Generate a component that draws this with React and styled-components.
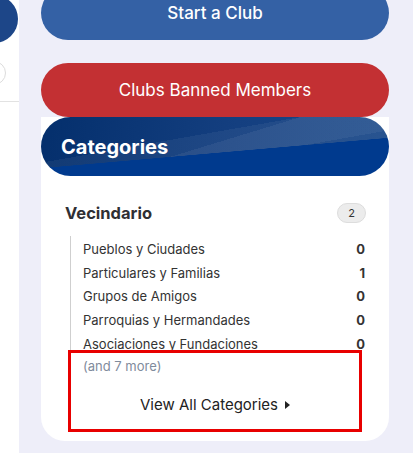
import React from "react";
import styled, { createGlobalStyle } from "styled-components";

const GlobalStyle = createGlobalStyle`
  html, body {
    margin: 0;
    padding: 0;
    background: #eeeef9;
    font-family: Inter, "Noto Sans", Arial, sans-serif;
  }
  * { box-sizing: border-box; }
`;

// --- Layout ---
const Page = styled.div`
  display: flex;
  gap: 22px;
  height: 453px;
  overflow: hidden;
`;

const Sidebar = styled.aside`
  width: 19px;
  flex-shrink: 0;
  background: #fff;
  overflow: hidden;
  display: flex;
  flex-direction: column;
`;

const AvatarBlob = styled.div`
  width: 48px;
  height: 48px;
  border-radius: 50%;
  background: #1d4688;
  margin: -5px 0 0 -30px;
  flex-shrink: 0;
`;

const SearchBlob = styled.div`
  width: 24px;
  height: 24px;
  border-radius: 50%;
  border: 1px solid #dcdcdc;
  background: #fff;
  margin: 18px 0 0 -18px;
  flex-shrink: 0;
`;

const SideRule = styled.div`
  height: 1px;
  background: #e2e2e2;
  margin-top: 16px;
`;

const Main = styled.main`
  width: 348px;
  flex-shrink: 0;
  margin-top: -14px;
  display: flex;
  flex-direction: column;
`;

const PillButton = styled.button`
  height: 54px;
  width: 100%;
  border: none;
  border-radius: 27px;
  background: ${p => p.$bg};
  color: #fff;
  font-family: inherit;
  font-size: 17px;
  font-weight: ${p => p.$weight || 400};
  margin-bottom: ${p => p.$gap || 0}px;
  cursor: pointer;
`;

// --- Categories card ---
const Card = styled.section`
  position: relative;
  background: #fff;
  border-radius: 0 0 24px 24px;
  padding-bottom: 25px;
`;

const CardHeader = styled.header`
  height: 59px;
  border-radius: 30px;
  padding: 0 20px;
  display: flex;
  align-items: center;
  color: #fff;
  font-size: 20px;
  font-weight: 700;
  background:
    linear-gradient(175deg, transparent 57%, #003a8e 57.5%),
    linear-gradient(170deg, transparent 38%, rgba(255,255,255,0.05) 38%, rgba(255,255,255,0.05) 62%, transparent 62%),
    linear-gradient(163deg, transparent 48%, rgba(255,255,255,0.06) 48%),
    linear-gradient(100deg, #042f6c 0%, #143f80 55%, #1c4a8a 100%);
`;

const GroupRow = styled.div`
  display: flex;
  align-items: center;
  justify-content: space-between;
  margin-top: 26px;
  padding: 0 23px 0 24px;
  height: 22px;
`;

const GroupTitle = styled.h3`
  margin: 0;
  font-size: 16.5px;
  font-weight: 700;
  color: #2f2f33;
`;

const Badge = styled.span`
  min-width: 29px;
  height: 20px;
  border-radius: 10px;
  background: #ececec;
  border: 1px solid #dddddd;
  font-size: 11px;
  color: #333;
  display: flex;
  align-items: center;
  justify-content: center;
`;

const SubList = styled.ul`
  list-style: none;
  margin: 12px 24px 0 29px;
  padding: 1px 0 0 12px;
  border-left: 1px solid #cfcfcf;
`;

const SubItem = styled.li`
  height: 23.8px;
  display: flex;
  align-items: center;
  justify-content: space-between;
  font-size: 13px;
  color: #333;
`;

const Count = styled.span`
  font-weight: 700;
  color: #333;
`;

const MoreNote = styled.div`
  margin: 1px 0 0 42px;
  height: 18px;
  display: flex;
  align-items: center;
  font-size: 13px;
  color: #7f8b9c;
`;

const ViewAll = styled.a`
  margin-top: 19px;
  height: 22px;
  display: flex;
  align-items: center;
  justify-content: center;
  gap: 7px;
  font-size: 15px;
  color: #222;
  text-decoration: none;
`;

const Caret = styled.span`
  width: 0;
  height: 0;
  border-top: 4.5px solid transparent;
  border-bottom: 4.5px solid transparent;
  border-left: 5px solid #222;
`;

// annotation frame drawn over the footer
const Highlight = styled.div`
  position: absolute;
  top: 233px;
  left: 27px;
  width: 294px;
  height: 82px;
  border: 3.5px solid #e80000;
  pointer-events: none;
`;

const items = [
  { name: "Pueblos y Ciudades", count: 0 },
  { name: "Particulares y Familias", count: 1 },
  { name: "Grupos de Amigos", count: 0 },
  { name: "Parroquias y Hermandades", count: 0 },
  { name: "Asociaciones y Fundaciones", count: 0 },
];

export default function App() {
  return (
    <>
      <GlobalStyle />
      <Page>
        <Sidebar>
          <AvatarBlob />
          <SearchBlob />
          <SideRule />
        </Sidebar>
        <Main>
          <PillButton $bg="#3461a5" $weight={500} $gap={23}>Start a Club</PillButton>
          <PillButton $bg="#c33033">Clubs Banned Members</PillButton>
          <Card>
            <CardHeader>Categories</CardHeader>
            <GroupRow>
              <GroupTitle>Vecindario</GroupTitle>
              <Badge>2</Badge>
            </GroupRow>
            <SubList>
              {items.map(it => (
                <SubItem key={it.name}>
                  <span>{it.name}</span>
                  <Count>{it.count}</Count>
                </SubItem>
              ))}
            </SubList>
            <MoreNote>(and 7 more)</MoreNote>
            <ViewAll href="#">
              View All Categories <Caret />
            </ViewAll>
            <Highlight />
          </Card>
        </Main>
      </Page>
    </>
  );
}
